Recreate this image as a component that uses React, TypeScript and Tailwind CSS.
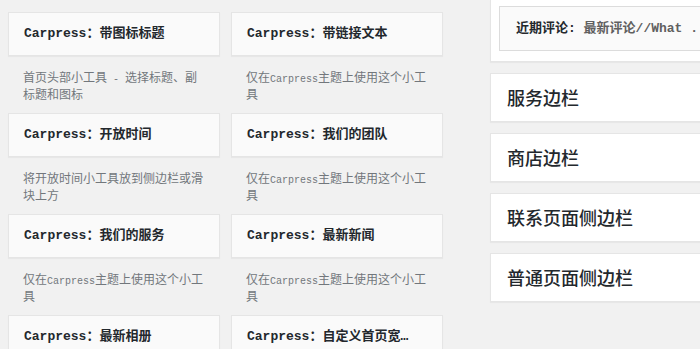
const mono = "font-['Liberation_Mono','Noto_Sans_CJK_SC',monospace]";
const cjk = "font-['Noto_Sans_CJK_SC','Liberation_Sans',sans-serif]";

type Widget = { title: string; desc: React.ReactNode };

const Latin = ({ children }: { children: React.ReactNode }) => (
  <span className="font-['Liberation_Mono',monospace] text-[10px] leading-[10px] align-baseline">
    {children}
  </span>
);

const onlyHere = (
  <>
    仅在<Latin>Carpress</Latin>主题上使用这个小工具
  </>
);

const widgets: Widget[] = [
  {
    title: "带图标标题",
    desc: (
      <>
        首页头部小工具<Latin> - </Latin>选择标题、副标题和图标
      </>
    ),
  },
  { title: "带链接文本", desc: onlyHere },
  { title: "开放时间", desc: "将开放时间小工具放到侧边栏或滑块上方" },
  { title: "我们的团队", desc: onlyHere },
  { title: "我们的服务", desc: onlyHere },
  { title: "最新新闻", desc: onlyHere },
  { title: "最新相册", desc: onlyHere },
  { title: "自定义首页宽…", desc: onlyHere },
];

const sidebars = ["服务边栏", "商店边栏", "联系页面侧边栏", "普通页面侧边栏"];

const WidgetItem = ({ w }: { w: Widget }) => (
  <div className="flex flex-col">
    <div className="h-[44px] flex items-center px-[15px] bg-[#fafafa] border border-[#e5e5e5] shadow-[0_1px_1px_rgba(0,0,0,0.04)]">
      <span className={`${mono} text-[13px] font-bold text-[#23282d] whitespace-nowrap`}>
        Carpress：{w.title}
      </span>
    </div>
    <div className={`${cjk} h-[57px] pt-[12px] px-[15px] text-[12px] leading-[17px] text-[#72777c]`}>
      {w.desc}
    </div>
  </div>
);

export default function App() {
  return (
    <div className="w-[700px] h-[349px] overflow-hidden bg-[#f1f1f1] flex">
      <div className="pl-[8px] pt-[12px] w-[490px] shrink-0">
        <div className="grid grid-cols-[212px_212px] gap-x-[11px]">
          {widgets.map((w, i) => (
            <WidgetItem key={i} w={w} />
          ))}
        </div>
      </div>
      <div className="w-[260px] shrink-0 flex flex-col gap-[11px]">
        <div className="bg-white border-x border-b border-[#e5e5e5] pt-[6px] pb-[10px] pl-[8px] shadow-[0_1px_1px_rgba(0,0,0,0.04)]">
          <div className="h-[45px] flex items-center pl-[16px] bg-[#fafafa] border border-[#dcdcdc] border-r-0 overflow-hidden">
            <span className={`${mono} text-[13px] font-bold whitespace-nowrap`}>
              <span className="text-[#23282d]">近期评论:</span>
              <span className="text-[#606060]"> 最新评论//What ...</span>
            </span>
          </div>
        </div>
        {sidebars.map((s) => (
          <div
            key={s}
            className="h-[49px] flex items-center pl-[16px] bg-white border border-[#e5e5e5] shadow-[0_1px_1px_rgba(0,0,0,0.04)]"
          >
            <span className={`${cjk} text-[18px] font-medium text-[#23282d]`}>{s}</span>
          </div>
        ))}
      </div>
    </div>
  );
}
